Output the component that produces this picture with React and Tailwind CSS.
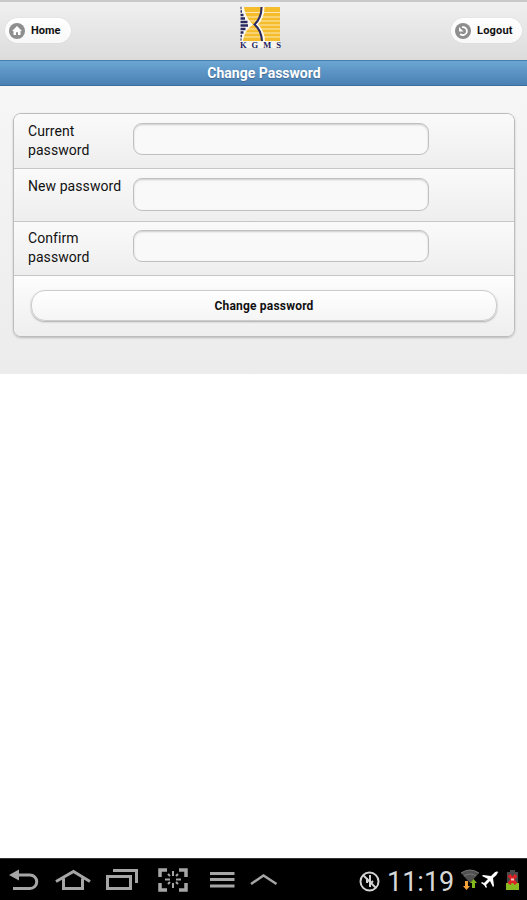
import React from 'react';

const fields = [
  { id: 'current', label: 'Current password', row: 'h-[55px] pt-[8px]', input: 'mt-px h-[32px]' },
  { id: 'new', label: 'New password', row: 'h-[53px] pt-[8px]', input: 'mt-px h-[33px]' },
  { id: 'confirm', label: 'Confirm password', row: 'h-[54px] pt-[7px]', input: 'mt-px h-[32px]' },
];

function Logo() {
  return (
    <svg width="44" height="46" viewBox="0 0 44 46" className="ml-[105px] mt-[4px]">
      <path fill="#fbe9b5" d="M3 1h39v34H3z" />
      <g fill="#f5bd2b">
        <path d="M3 1h39v5H3zM3 7h39v3.500H3zM3 11.500h39v3H3zM3 15.500h39v3H3zM3 19.500h39v3H3zM3 23.500h39v3H3zM3 27.500h39v3H3zM3 31.500h39V35H3z" />
      </g>
      <path fill="#fbf8ee" d="M2 1h4c1 8 4 13 9 17.500C9 23 6 28 5 35H2z" />
      <path stroke="#292963" strokeWidth="2.400" d="M2.500 2h1M2.500 5.500H4M2.500 9h3M2.500 12.500H7M2.500 16h7M2.500 19.500h7.500M2.500 23h5M2.500 26.500h3M2.500 30H4M2.500 33.500h1" />
      <path fill="none" stroke="#fbf8ee" strokeWidth="2" d="M25.500 1c0 7-2 13-7 17.500 5 4 7 9 7.500 16.500" />
      <path fill="none" stroke="#292963" strokeWidth="2" d="M23.500 1c0 7-2 13-7 17.500 5 4 7 9 7.500 16.500" />
      <path fill="#f8f5ee" d="M2 35h40v7H2z" />
      <text x="2" y="41.500" fill="#20205d" fontFamily="Liberation Serif, serif" fontWeight="bold" fontSize="8.500" textLength="41">KGMS</text>
    </svg>
  );
}

function HomeIcon() {
  return (
    <svg width="16" height="16" viewBox="0 0 16 16">
      <circle cx="8" cy="8" r="8" fill="#8e8e8e" />
      <path fill="#fff" d="M8 3 3 8h1.500v4H7V9.300h2V12h2.500V8H13z" />
    </svg>
  );
}

function LogoutIcon() {
  return (
    <svg width="16" height="16" viewBox="0 0 16 16">
      <circle cx="8" cy="8" r="8" fill="#8e8e8e" />
      <path fill="none" stroke="#fff" strokeWidth="1.800" d="M7 4.200A4 4 0 1 1 5.200 11" />
      <path fill="#fff" d="M4 4v4.500h4.500z" />
    </svg>
  );
}

function Header() {
  return (
    <header className="flex h-[60px] items-start border-t-2 border-[#c9c9c9] bg-linear-to-b from-[#f0f0f0] to-[#dcdcdc]">
      <button className="ml-[5px] mt-[16px] flex h-[25px] w-[66px] items-center rounded-full bg-linear-to-b from-white to-[#f8f8f8] pl-[4px] text-[11px] font-bold shadow-[0_0_1px_#bbb]">
        <HomeIcon />
        <span className="ml-[6px] pt-px">Home</span>
      </button>
      <div className="w-[167px] shrink-0 -ml-[105px]" aria-hidden="true" />
      <Logo />
      <button className="ml-auto mr-[5px] mt-[16px] flex h-[25px] w-[71px] items-center rounded-full bg-linear-to-b from-white to-[#f8f8f8] pl-[4px] text-[11px] font-bold tracking-[0.2px] shadow-[0_0_1px_#bbb]">
        <LogoutIcon />
        <span className="ml-[6px] pt-px">Logout</span>
      </button>
    </header>
  );
}

function SystemBar() {
  return (
    <footer className="flex h-[42px] items-start border-t border-[#333] bg-black text-[#a6a6a6]">
      <svg width="300" height="41" viewBox="0 0 300 41" fill="none" stroke="currentColor" strokeWidth="3">
        <path d="M16 16h14a6 6 0 0 1 0 13.500H13" />
        <path fill="currentColor" stroke="none" d="m9 16 10-5.500v11z" />
        <path d="m56 22.500 17.500-10L90 22.500M63.500 19.500v10h19v-10" />
        <path d="M107.500 17.500h23v12h-23zM113 11.500h23.500V24" />
        <path strokeWidth="3.500" d="M160 18v-7h7M179 11h7v7M186 24v7h-7M167 31h-7v-7" />
        <path strokeWidth="2" d="M173 12v5m0 7v5m-8-8.500h5m6 0h5M168 15l2 2m6 6 2 2m0-10-2 2m-6 6-2 2" />
        <path d="M210 14.500h24.500M210 20.500h24.500M210 27h24.500" />
        <path strokeWidth="2.500" d="m251 25 12.500-8.500 13 8.500" />
      </svg>
      <svg width="22" height="41" viewBox="0 0 22 41" fill="none" stroke="#d3d3d3" strokeWidth="2" className="ml-[59px]">
        <circle cx="10.500" cy="22.500" r="9" />
        <path d="m4 16 13 13" />
        <path strokeWidth="2" d="M11 16v12M8 19v5M14 22l-3 3" />
      </svg>
      <span className="ml-[6px] mt-[5px] w-[68px] text-[27px] leading-[37px] text-[#d8d8d8]">11:19</span>
      <svg width="65" height="41" viewBox="0 0 65 41" className="ml-[5px]">
        <path fill="#505050" d="M1 14q9-6 18 0l-9 10z" />
        <path fill="none" stroke="#777" d="M1 14q9-6 18 0M4 17q6-4 12 0" />
        <path fill="#f5a23b" d="M5 22h3v5h2l-3.500 4L3 27h2z" />
        <path fill="#83b91f" d="M12 29v-5h-2l3.500-4 3.500 4h-2v5z" />
        <path fill="#fff" d="m38.500 13.500-1-1q-2-.5-4 2L31 17l-8-1-1 1 6 3-4 4-2-1-1 1 3 2 2 3 1-1-1-2 4-4 3 6 1-1-1-8 3-2.500q2-2 1.500-3z" />
        <path fill="#484848" d="M50 11h5v2h3v18H47V13h3z" />
        <path fill="#88ba22" d="M46 24h13v7H46z" />
        <path fill="none" stroke="#df2226" strokeWidth="3.500" d="m49 16 7 9m0-9-7 9" />
        <path stroke="#f4c5c5" strokeWidth="2" d="M51 20.500h3" />
      </svg>
    </footer>
  );
}

export default function App() {
  return (
    <div className="flex h-[900px] w-full flex-col bg-white font-['Roboto',sans-serif] text-[#111]">
      <Header />
      <div className="h-[26px] border-y border-t-[#477fa9] border-b-[#3d6f9e] bg-linear-to-b from-[#6aa6d3] to-[#4b80b4] pl-px text-center text-[14px] leading-[24px] font-bold text-white [text-shadow:0_1px_1px_#3e6790]">
        Change Password
      </div>
      <main className="h-[288px] bg-linear-to-b from-[#f6f6f6] to-[#ececec] pt-[27px] pr-[12px] pl-[13px]">
        <form
          onSubmit={(e) => e.preventDefault()}
          className="flex h-[224px] flex-col overflow-hidden rounded-lg border border-[#bcbcbc] shadow-[0_1px_2px_#bbb]"
        >
          {fields.map((f) => (
            <div
              key={f.id}
              className={`flex shrink-0 items-start border-b border-[#c6c6c6] bg-linear-to-b from-[#fafafa] to-[#eeeeee] pl-[14px] ${f.row}`}
            >
              <label htmlFor={f.id} className="w-[105px] pr-[8px] text-[14px] leading-[19px] tracking-[0.07px]">
                {f.label}
              </label>
              <input
                id={f.id}
                type="password"
                className={`w-[296px] rounded-[9px] border border-[#c0c0c0] bg-[#f9f9f9] shadow-[inset_0_1px_2px_#ccc] ${f.input}`}
              />
            </div>
          ))}
          <div className="flex-1 bg-linear-to-b from-[#fdfdfd] to-[#eeeeee] px-[17px] pt-[14px]">
            <button className="h-[31px] w-full rounded-[14px] border border-[#ccc] bg-linear-to-b from-white to-[#f5f5f5] text-[12px] font-bold tracking-[0.2px] shadow-[0_1px_2px_#aaa]">
              Change password
            </button>
          </div>
        </form>
      </main>
      <div className="flex-1" />
      <SystemBar />
    </div>
  );
}
